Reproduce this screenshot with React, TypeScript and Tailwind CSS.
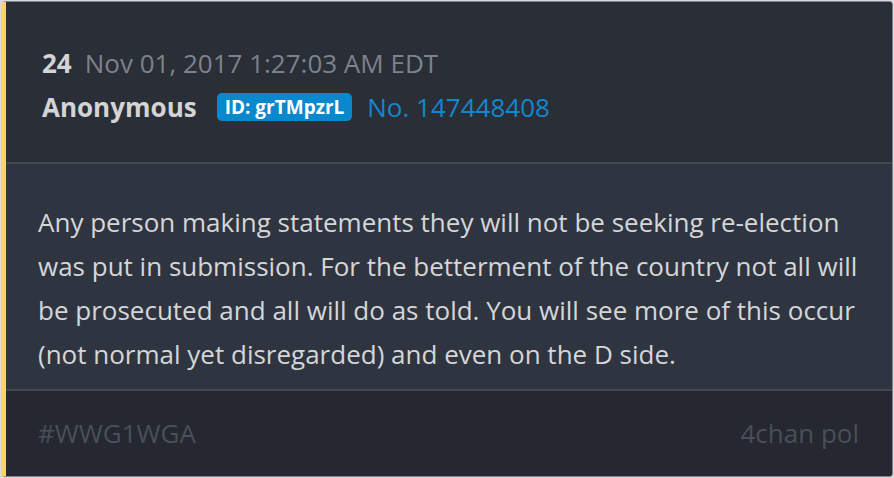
export default function App() {
  return (
    <div className="w-[894px] h-[478px] bg-[#d9dbdf] p-px" style={{ fontFamily: '"Open Sans", "Noto Sans", sans-serif' }}>
      <div className="h-full flex flex-col overflow-hidden rounded-[4px] border border-[#7f848c] border-l-[5px] border-l-[#fdd55b] bg-[#2a2e37]">
        <div className="h-[160px] shrink-0 bg-[#2a2e37] pl-[36px] pt-[42px]">
          <div className="flex items-baseline gap-[13px] leading-[38px]">
            <span className="text-[26px] font-bold text-[#d4d4d6]">24</span>
            <span className="text-[26px] text-[#7e828d]">Nov 01, 2017 1:27:03 AM EDT</span>
          </div>
          <div className="mt-[6px] flex items-center leading-[38px]">
            <span className="text-[26px] font-bold text-[#d4d4d6]">Anonymous</span>
            <span className="ml-[20px] rounded-[5px] bg-[#0a88ce] px-[8px] text-[19px] font-bold leading-[28px] text-white">ID: grTMpzrL</span>
            <span className="ml-[15px] text-[26px] text-[#1188cc]">No. 147448408</span>
          </div>
        </div>
        <div className="h-[2px] shrink-0 bg-[#43474f]" />
        <div className="h-[225px] shrink-0 bg-[#2f3540] px-[32px] pt-[36px] text-[26px] leading-[44px] text-[#d5d6d8]">
          Any person making statements they will not be seeking re-election was put in submission. For the betterment of the country not all will be prosecuted and all will do as told. You will see more of this occur (not normal yet disregarded) and even on the D side.
        </div>
        <div className="h-[2px] shrink-0 bg-[#43474f]" />
        <div className="flex flex-1 items-center justify-between bg-[#252830] pl-[32px] pr-[33px] text-[26px] text-[#4a4f59]">
          <span>#WWG1WGA</span>
          <span>4chan pol</span>
        </div>
      </div>
    </div>
  );
}
